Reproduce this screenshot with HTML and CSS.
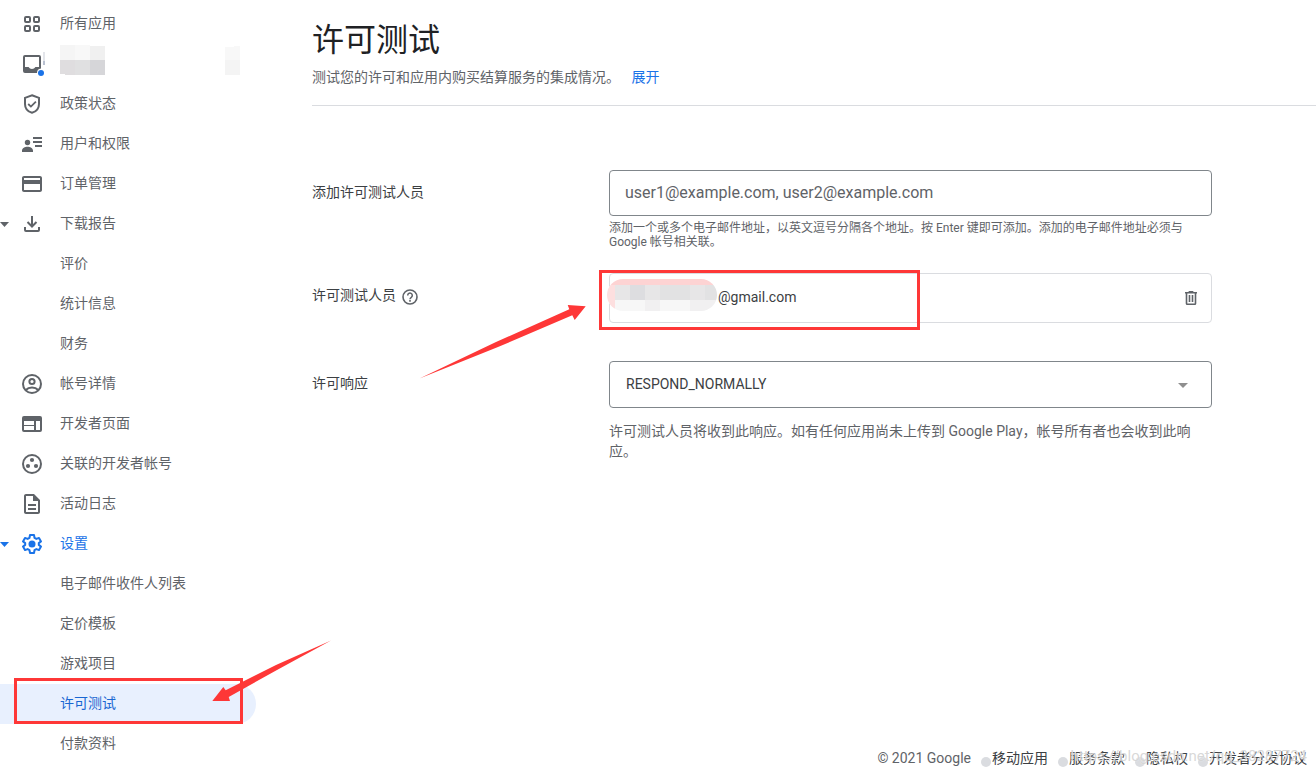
FILE: index.html
```html
<!DOCTYPE html>
<html lang="zh-CN">

<head>
  <meta charset="UTF-8">
  <meta name="viewport" content="width=device-width, initial-scale=1.0">
  <title>许可测试</title>

  <link rel="stylesheet" href="styles.css">
</head>

<body>
  <div class="layout">
    <nav class="sidebar">
      <ul class="nav">
        <li class="nav__item">
          <a class="nav__link" href="#">
            <svg class="nav__icon" viewBox="0 0 24 24"><g fill="none" stroke="currentColor" stroke-width="2"><rect x="5" y="5" width="5" height="5" rx="1"/><rect x="14" y="5" width="5" height="5" rx="1"/><rect x="5" y="14" width="5" height="5" rx="1"/><rect x="14" y="14" width="5" height="5" rx="1"/></g></svg>
            <span class="nav__text">所有应用</span>
          </a>
        </li>
        <li class="nav__item">
          <a class="nav__link" href="#" aria-label="收件箱">
            <svg class="nav__icon" viewBox="0 0 24 24"><path fill="currentColor" fill-rule="evenodd" d="M5 3h14a2 2 0 0 1 2 2v11.500a4.500 4.500 0 0 0-4 4.500H5a2 2 0 0 1-2-2V5a2 2 0 0 1 2-2zM5 5v10h3.600c.7 1.200 2 2 3.400 2s2.700-.8 3.400-2H19V5z"/><circle cx="21" cy="21" r="3" fill="#1a73e8"/><path fill="#e3e5ea" d="M23 0h2v9h-2z"/><path fill="#b9c1d1" d="M23 9h2v4h-2z"/></svg>
            <svg class="nav__mask" viewBox="0 0 180 30"><path fill="#f5f5f5" d="M0 0h15v15H0z"/><path fill="#f8f8f8" d="M15 0h15v15H15z"/><path fill="#f0f0f0" d="M30 1h15v14H30z"/><path fill="#dfdddf" d="M0 15h15v15H5v-1H0z"/><path fill="#e0e0e1" d="M15 15h15v15H15z"/><path fill="#d6d6d9" d="M30 15h15v15H30z"/><path fill="#f8f8f8" d="M165 2h9V1h6v14h-15z"/><path fill="#f4f4f4" d="M165 15h15v15h-15z"/></svg>
          </a>
        </li>
        <li class="nav__item">
          <a class="nav__link" href="#">
            <svg class="nav__icon" viewBox="0 0 24 24"><path fill="none" stroke="currentColor" stroke-width="2" d="M12 3.200l7 2.700V12c0 4.200-2.800 7.600-7 8.800-4.200-1.200-7-4.600-7-8.800V5.900z"/><path fill="none" stroke="currentColor" stroke-width="1.800" d="M8.200 12l2.700 2.600 5-5"/></svg>
            <span class="nav__text">政策状态</span>
          </a>
        </li>
        <li class="nav__item">
          <a class="nav__link" href="#">
            <svg class="nav__icon" viewBox="0 0 24 24"><g fill="currentColor"><circle cx="7.500" cy="10.500" r="2.700"/><path d="M2 20v-1.500c0-2.300 3-3.700 5.500-3.700S13 16.200 13 18.500V20zM13 5h9v2h-9zM13 9h9v2h-9zM15 13h7v2h-7z"/></g></svg>
            <span class="nav__text">用户和权限</span>
          </a>
        </li>
        <li class="nav__item">
          <a class="nav__link" href="#">
            <svg class="nav__icon" viewBox="0 0 24 24"><path fill="currentColor" d="M20 4H4c-1.110 0-2 .89-2 2v12c0 1.110.89 2 2 2h16c1.110 0 2-.89 2-2V6c0-1.110-.89-2-2-2zm0 14H4v-6h16v6zm0-10H4V6h16v2z"/></svg>
            <span class="nav__text">订单管理</span>
          </a>
        </li>
        <li class="nav__item">
          <a class="nav__link" href="#">
            <svg class="nav__caret" viewBox="0 0 10 5"><path fill="currentColor" d="M0 0h9L4.500 5z"/></svg>
            <svg class="nav__icon" viewBox="0 0 24 24"><path fill="none" stroke="currentColor" stroke-width="2" d="M12 4v10M7.500 10l4.500 4.500L16.500 10M5 15v3a1 1 0 0 0 1 1h12a1 1 0 0 0 1-1v-3"/></svg>
            <span class="nav__text">下载报告</span>
          </a>
        </li>
        <li class="nav__item"><a class="nav__link nav__link--sub" href="#"><span class="nav__text">评价</span></a></li>
        <li class="nav__item"><a class="nav__link nav__link--sub" href="#"><span class="nav__text">统计信息</span></a></li>
        <li class="nav__item"><a class="nav__link nav__link--sub" href="#"><span class="nav__text">财务</span></a></li>
        <li class="nav__item">
          <a class="nav__link" href="#">
            <svg class="nav__icon" viewBox="0 0 24 24"><g fill="none" stroke="currentColor" stroke-width="2"><circle cx="12" cy="12" r="9"/><circle cx="12" cy="9.500" r="2.600"/><path d="M5.800 18c1.600-1.700 3.800-2.500 6.200-2.500s4.600.8 6.200 2.500"/></g></svg>
            <span class="nav__text">帐号详情</span>
          </a>
        </li>
        <li class="nav__item">
          <a class="nav__link" href="#">
            <svg class="nav__icon" viewBox="0 0 24 24"><path fill="currentColor" fill-rule="evenodd" d="M4 4h16a2 2 0 0 1 2 2v12a2 2 0 0 1-2 2H4a2 2 0 0 1-2-2V6a2 2 0 0 1 2-2zm0 5v4h10V9zm0 5v4h10v-4zm12-5v9h4V9z"/></svg>
            <span class="nav__text">开发者页面</span>
          </a>
        </li>
        <li class="nav__item">
          <a class="nav__link" href="#">
            <svg class="nav__icon" viewBox="0 0 24 24"><circle cx="12" cy="12" r="9" fill="none" stroke="currentColor" stroke-width="2"/><g fill="currentColor"><circle cx="12" cy="8" r="2.100"/><circle cx="8" cy="14" r="2.100"/><circle cx="16" cy="14" r="2.100"/></g></svg>
            <span class="nav__text">关联的开发者帐号</span>
          </a>
        </li>
        <li class="nav__item">
          <a class="nav__link" href="#">
            <svg class="nav__icon" viewBox="0 0 24 24"><path fill="currentColor" d="M8 16h8v2H8zm0-4h8v2H8zm6-10H6c-1.100 0-2 .9-2 2v16c0 1.100.89 2 1.990 2H18c1.100 0 2-.9 2-2V8l-6-6zm4 18H6V4h7v5h5v11z"/></svg>
            <span class="nav__text">活动日志</span>
          </a>
        </li>
        <li class="nav__item">
          <a class="nav__link nav__link--open" href="#">
            <svg class="nav__caret" viewBox="0 0 10 5"><path fill="currentColor" d="M0 0h9L4.500 5z"/></svg>
            <svg class="nav__icon" viewBox="0 0 24 24"><path fill="none" stroke="currentColor" stroke-width="2" stroke-linejoin="round" d="M10 3h4l.5 2.800 1.900 1.100 2.600-1 2 3.500-2.200 1.700v1.800l2.200 1.700-2 3.500-2.600-1-1.900 1.100L14 21h-4l-.5-2.800-1.900-1.100-2.600 1-2-3.500 2.200-1.700v-1.800L3 9.400l2-3.500 2.600 1 1.900-1.100z"/><circle cx="12" cy="12" r="3.500" fill="currentColor"/></svg>
            <span class="nav__text">设置</span>
          </a>
        </li>
        <li class="nav__item"><a class="nav__link nav__link--sub" href="#"><span class="nav__text">电子邮件收件人列表</span></a></li>
        <li class="nav__item"><a class="nav__link nav__link--sub" href="#"><span class="nav__text">定价模板</span></a></li>
        <li class="nav__item"><a class="nav__link nav__link--sub" href="#"><span class="nav__text">游戏项目</span></a></li>
        <li class="nav__item">
          <a class="nav__link nav__link--sub nav__link--active" href="#" aria-current="page"><span class="nav__text">许可测试</span></a>
          <svg class="mark mark--nav" viewBox="13 640 319 85"><rect x="15.500" y="679.500" width="226" height="43"/><path d="M331 640.500L276 665 225.700 690.300 223.300 687 212.300 701H230L228.700 697 277 670z"/></svg>
        </li>
        <li class="nav__item"><a class="nav__link nav__link--sub" href="#"><span class="nav__text">付款资料</span></a></li>
      </ul>
    </nav>

    <div class="page">
      <main class="content">
        <header class="header">
          <h1 class="header__title">许可测试</h1>
          <p class="header__text">测试您的许可和应用内购买结算服务的集成情况。 <a class="header__more" href="#">展开</a></p>
        </header>

        <form class="form">
          <div class="form__item">
            <label class="form__label" for="testerEmails">添加许可测试人员</label>
            <div class="form__field">
              <input class="form__input" id="testerEmails" type="text" placeholder="user1@example.com, user2@example.com">
              <p class="form__hint">添加一个或多个电子邮件地址，以英文逗号分隔各个地址。按 Enter 键即可添加。添加的电子邮件地址必须与 Google 帐号相关联。</p>
            </div>
          </div>

          <div class="form__item">
            <div class="form__label">
              <span>许可测试人员</span>
              <button class="icon-button icon-button--help" type="button" aria-label="帮助">
                <svg class="icon-button__help" viewBox="0 0 16 16"><circle cx="8" cy="8" r="7" fill="none" stroke="currentColor" stroke-width="1.600"/><path fill="none" stroke="currentColor" stroke-width="1.500" d="M5.700 6.400a2.300 2.300 0 1 1 3.600 1.900C8.400 8.900 8 9.200 8 10.200"/><path fill="currentColor" d="M7.200 11.100h1.600v1.600H7.200z"/></svg>
              </button>
            </div>
            <div class="form__field">
              <div class="tester">
                <span class="tester__email">@gmail.com</span>
                <button class="icon-button" type="button" aria-label="删除">
                  <svg class="icon-button__trash" viewBox="0 0 12 14"><path fill="currentColor" fill-rule="evenodd" d="M4 0h4l.7 1H12v1.600h-.7V12.500A1.500 1.500 0 0 1 9.800 14H2.200A1.500 1.500 0 0 1 .7 12.500V2.600H0V1h3.300zM2.300 2.600v9.800h7.400V2.600zM3.700 4h1.600v7H3.700zM6.700 4h1.600v7H6.700z"/></svg>
                </button>
                <svg class="mark mark--tester" viewBox="419 269 502 111">
                  <clipPath id="pill"><rect x="607" y="279" width="110" height="32" rx="16"/></clipPath>
                  <g clip-path="url(#pill)">
                    <path fill="#fff" d="M607 279h110v32H607z"/>
                    <path fill="#fdd3d3" d="M607 279h110v6H607z"/>
                    <path fill="#fddfdf" d="M607 285h8v26h-8z"/>
                    <path fill="#e7e6e7" d="M615 285h15v15h-15zM645 285h15v15h-15zM690 285h15v15h-15z"/>
                    <path fill="#dddde0" d="M630 285h15v15h-15z"/>
                    <path fill="#e2e2e3" d="M660 285h30v15h-30zM705 285h15v15h-15z"/>
                    <path fill="#f7f7f7" d="M615 300h30v11h-30zM660 300h30v11h-30z"/>
                    <path fill="#f1f0f1" d="M645 300h15v11h-15zM690 300h30v11h-30z"/>
                  </g>
                  <rect x="600.500" y="271.500" width="318" height="57"/>
                  <path d="M419.500 378.500L496 342 569.300 309.300 567.700 305 585.700 306.300 574.700 320 572.300 315.300 498 347z"/>
                </svg>
              </div>
            </div>
          </div>

          <div class="form__item">
            <label class="form__label" for="licenseResponse">许可响应</label>
            <div class="form__field">
              <div class="form__select-wrap">
                <select class="form__select" id="licenseResponse">
                  <option>RESPOND_NORMALLY</option>
                </select>
                <svg class="form__arrow" viewBox="0 0 10 5"><path fill="currentColor" d="M0 0h10L5 5z"/></svg>
              </div>
              <p class="form__help">许可测试人员将收到此响应。如有任何应用尚未上传到 Google Play，帐号所有者也会收到此响应。</p>
            </div>
          </div>
        </form>
      </main>

      <footer class="footer">
        <span>© 2021 Google</span>
        <a class="footer__link" href="#">移动应用</a>
        <a class="footer__link" href="#">服务条款</a>
        <a class="footer__link" href="#">隐私权</a>
        <a class="footer__link" href="#">开发者分发协议</a>
        <span class="footer__watermark">https://blog.csdn.net/qq_38287724</span>
      </footer>
    </div>
  </div>
</body>

</html>
```
FILE: styles.css
```css
* {
  box-sizing: border-box;
}

body {
  margin: 0;
  background: #fff;
  color: #3c4043;
  font-family: Roboto, "Noto Sans CJK SC", sans-serif;
  font-size: 14px;
  line-height: 20px;
}

a {
  color: inherit;
  text-decoration: none;
}

.layout {
  display: flex;
  min-height: 100vh;
}

/* Sidebar */
.sidebar {
  flex: 0 0 256px;
  padding-top: 4px;
  color: #5f6368;
}

.nav {
  margin: 0;
  padding: 0;
  list-style: none;
}

.nav__item {
  position: relative;
}

.nav__link {
  display: flex;
  align-items: center;
  gap: 16px;
  height: 40px;
  padding-left: 20px;
  border-radius: 0 20px 20px 0;
}

.nav__link--sub {
  padding-left: 60px;
}

.nav__link--open {
  color: #1a73e8;
}

.nav__link--active {
  background: #e8f0fe;
  color: #1967d2;
}

.nav__text {
  padding-bottom: 2px;
}

.nav__icon {
  width: 24px;
  height: 24px;
  overflow: visible;
}

.nav__caret {
  position: absolute;
  top: 18px;
  left: 0;
  width: 10px;
  height: 5px;
}

.nav__mask {
  width: 180px;
  height: 30px;
  margin-bottom: 8px;
}

/* Red marks drawn over the page */
.mark {
  position: absolute;
  z-index: 1;
  fill: #fe3737;
  pointer-events: none;
}

.mark > rect {
  fill: none;
  stroke: #fe3737;
  stroke-width: 3px;
}

.mark--nav {
  top: -44px;
  left: 13px;
  width: 319px;
  height: 85px;
}

.mark--tester {
  top: -5px;
  left: -191px;
  width: 502px;
  height: 111px;
}

/* Main column */
.page {
  display: flex;
  flex: 1;
  flex-direction: column;
  min-width: 0;
  padding-left: 56px;
}

.content {
  flex: 1;
}

.header {
  padding: 20px 0 18px;
  border-bottom: 1px solid #dadce0;
}

.header__title {
  margin: 0 0 7px;
  color: #202124;
  font-size: 32px;
  font-weight: 400;
  line-height: 40px;
}

.header__text {
  margin: 0;
  color: #5f6368;
}

.header__more {
  margin-left: 8px;
  color: #1a73e8;
}

.form {
  padding: 64px 104px 0 0;
}

.form__item {
  display: grid;
  grid-template-columns: 33fr 67fr;
  margin-bottom: 24px;
}

.form__item + .form__item + .form__item {
  margin-top: 38px;
}

.form__label {
  display: flex;
  align-items: center;
  align-self: start;
  gap: 6px;
  padding-top: 12px;
}

.form__input,
.form__select {
  display: block;
  width: 100%;
  height: 46px;
  padding: 0 15px 2px;
  border: 1px solid #80868b;
  border-radius: 4px;
  background: #fff;
  color: #3c4043;
  font-family: inherit;
  font-size: 16px;
}

.form__input::placeholder {
  color: #5f6368;
  opacity: 1;
}

.form__select {
  height: 47px;
  padding: 0 16px 2px;
  font-size: 14px;
  appearance: none;
}

.form__select-wrap {
  position: relative;
}

.form__arrow {
  position: absolute;
  top: 22px;
  right: 24px;
  width: 10px;
  height: 5px;
  color: #8f8f8f;
  pointer-events: none;
}

.form__hint {
  margin: 5px 0 0;
  color: #5f6368;
  font-size: 12px;
  line-height: 14px;
}

.form__help {
  margin: 13px 0 0;
  color: #5f6368;
}

.tester {
  position: relative;
  display: flex;
  align-items: center;
  justify-content: space-between;
  height: 50px;
  padding: 0 14px 0 108px;
  border: 1px solid #dadce0;
  border-radius: 4px;
}

.tester__email {
  padding-bottom: 2px;
}

.icon-button {
  display: flex;
  padding: 0;
  border: 0;
  background: none;
  color: #5f6368;
  cursor: pointer;
}

.icon-button--help {
  padding-top: 4px;
}

.icon-button__help {
  width: 16px;
  height: 16px;
}

.icon-button__trash {
  width: 12px;
  height: 14px;
}

/* Footer */
.footer {
  position: relative;
  display: flex;
  justify-content: flex-end;
  gap: 10px;
  padding: 0 9px 6px 0;
  color: #5f6368;
}

.footer__link {
  display: flex;
  color: #3c4043;
}

.footer__link::before {
  width: 10px;
  height: 10px;
  margin: 9px 1px 0 0;
  border-radius: 50%;
  background: #dadce0;
  content: "";
}

.footer__watermark {
  position: absolute;
  right: 9px;
  bottom: 8px;
  color: rgba(190, 190, 190, .6);
  font-size: 15px;
  text-shadow: 0 0 1px #fff;
  pointer-events: none;
}
```
